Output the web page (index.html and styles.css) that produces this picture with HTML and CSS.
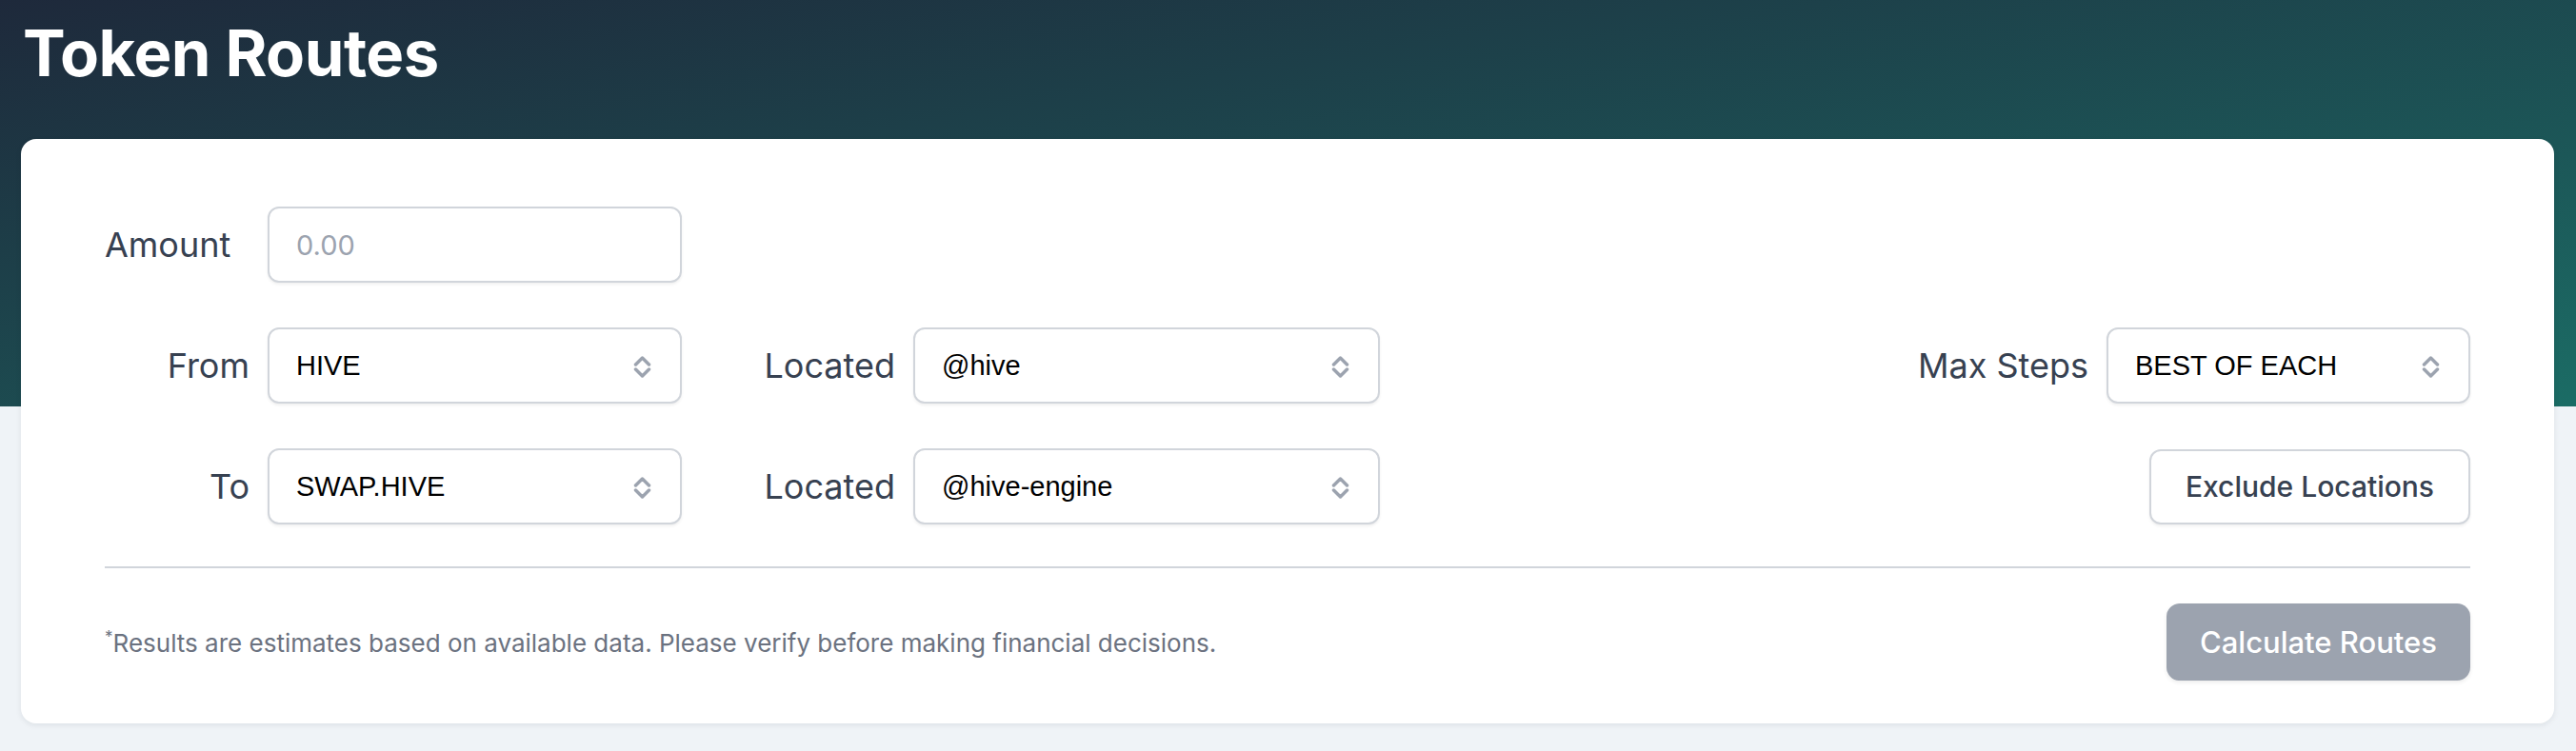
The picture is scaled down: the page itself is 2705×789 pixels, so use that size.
FILE: index.html
```html
<!DOCTYPE html>
<html lang="en">
<head>
    <meta charset="UTF-8">
    <meta name="viewport" content="width=device-width, initial-scale=1.0">
    <title>Token Routes</title>
    <link rel="stylesheet" href="styles.css">
</head>
<body>
    <header>
        <h1>Token Routes</h1>
    </header>
    <main>
        <section class="card">
            <form class="route-form" onsubmit="return false">
                <label class="field-label start" for="amount">Amount</label>
                <input id="amount" class="control amount" type="text" placeholder="0.00">
                <span></span><span></span><span></span><span></span>

                <label class="field-label" for="from">From</label>
                <div class="select-wrap">
                    <select id="from" class="control">
                        <option>HIVE</option>
                        <option>SWAP.HIVE</option>
                    </select>
                    <svg class="chevrons" viewBox="0 0 19 23"><path d="M2.5 9l7-7 7 7M2.5 14l7 7 7-7"/></svg>
                </div>
                <label class="field-label" for="from-loc">Located</label>
                <div class="select-wrap">
                    <select id="from-loc" class="control">
                        <option>@hive</option>
                        <option>@hive-engine</option>
                    </select>
                    <svg class="chevrons" viewBox="0 0 19 23"><path d="M2.5 9l7-7 7 7M2.5 14l7 7 7-7"/></svg>
                </div>
                <label class="field-label" for="steps">Max Steps</label>
                <div class="select-wrap">
                    <select id="steps" class="control">
                        <option>BEST OF EACH</option>
                        <option>1</option>
                        <option>2</option>
                        <option>3</option>
                    </select>
                    <svg class="chevrons" viewBox="0 0 19 23"><path d="M2.5 9l7-7 7 7M2.5 14l7 7 7-7"/></svg>
                </div>

                <label class="field-label" for="to">To</label>
                <div class="select-wrap">
                    <select id="to" class="control">
                        <option>SWAP.HIVE</option>
                        <option>HIVE</option>
                    </select>
                    <svg class="chevrons" viewBox="0 0 19 23"><path d="M2.5 9l7-7 7 7M2.5 14l7 7 7-7"/></svg>
                </div>
                <label class="field-label" for="to-loc">Located</label>
                <div class="select-wrap">
                    <select id="to-loc" class="control">
                        <option>@hive-engine</option>
                        <option>@hive</option>
                    </select>
                    <svg class="chevrons" viewBox="0 0 19 23"><path d="M2.5 9l7-7 7 7M2.5 14l7 7 7-7"/></svg>
                </div>
                <span></span>
                <button type="button" class="btn-outline">Exclude Locations</button>
            </form>
            <hr class="divider">
            <div class="card-footer">
                <p class="note"><sup>*</sup>Results are estimates based on available data. Please verify before making financial decisions.</p>
                <button type="button" class="btn-calc" disabled>Calculate Routes</button>
            </div>
        </section>
    </main>
</body>
</html>
```

FILE: styles.css
```css
body {
    margin: 0;
    font-family: 'Inter', 'Noto Sans', sans-serif;
    color: #374151;
    background: linear-gradient(to bottom right, #1e293b, #1b6c65) top left / 100% 427px no-repeat, #eff3f7;
    min-height: 789px;
}
header {
    padding: 22px 24px 0;
}
h1 {
    margin: 0;
    color: #fff;
    font-size: 67px;
    line-height: 1;
    font-weight: 700;
    letter-spacing: -0.5px;
}
main {
    padding: 57px 23px 0 22px;
}
.card {
    background-color: #fff;
    border-radius: 16px;
    box-shadow: 0 2px 6px rgba(15, 23, 42, 0.08);
    padding: 71px 88px 45px;
}
.route-form {
    display: grid;
    grid-template-columns: 152px 435px 205px 490px 1fr 382px;
    grid-auto-rows: 80px;
    column-gap: 19px;
    row-gap: 47px;
    align-items: center;
}
.field-label {
    justify-self: end;
    font-size: 36px;
    color: #374151;
}
.field-label.start {
    justify-self: start;
}
.control {
    box-sizing: border-box;
    width: 100%;
    height: 80px;
    border: 2px solid #d1d5db;
    border-radius: 12px;
    background-color: #fff;
    box-shadow: 0 2px 3px rgba(0, 0, 0, 0.06);
    padding: 0 28px;
    font-family: 'Liberation Sans', Arial, sans-serif;
    font-size: 29px;
    color: #000;
    outline: none;
}
.control.amount {
    font-family: 'Inter', 'Noto Sans', sans-serif;
}
input.control::placeholder {
    color: #9ca3af;
}
select.control {
    appearance: none;
    -webkit-appearance: none;
}
.select-wrap {
    position: relative;
}
.chevrons {
    position: absolute;
    right: 32px;
    top: 30px;
    width: 19px;
    height: 23px;
    fill: none;
    stroke: #9ca3af;
    stroke-width: 3.5;
    stroke-linecap: round;
    stroke-linejoin: round;
    pointer-events: none;
}
.btn-outline {
    justify-self: end;
    width: 337px;
    height: 79px;
    border: 2px solid #d1d5db;
    border-radius: 12px;
    background-color: #fff;
    box-shadow: 0 2px 3px rgba(0, 0, 0, 0.06);
    font-family: inherit;
    font-size: 30px;
    font-weight: 500;
    color: #374151;
    cursor: pointer;
}
.divider {
    border: none;
    border-top: 2px solid #d1d5db;
    margin: 44px 0 0;
}
.card-footer {
    display: flex;
    justify-content: space-between;
    align-items: center;
    margin-top: 37px;
}
.note {
    margin: 0;
    font-size: 26px;
    color: #6b7280;
}
.note sup {
    font-size: 17px;
}
.btn-calc {
    width: 319px;
    height: 81px;
    border: none;
    border-radius: 14px;
    background-color: #9ca3af;
    color: #fff;
    font-family: inherit;
    font-size: 31px;
    font-weight: 500;
    box-shadow: 0 2px 4px rgba(0, 0, 0, 0.08);
}
```
